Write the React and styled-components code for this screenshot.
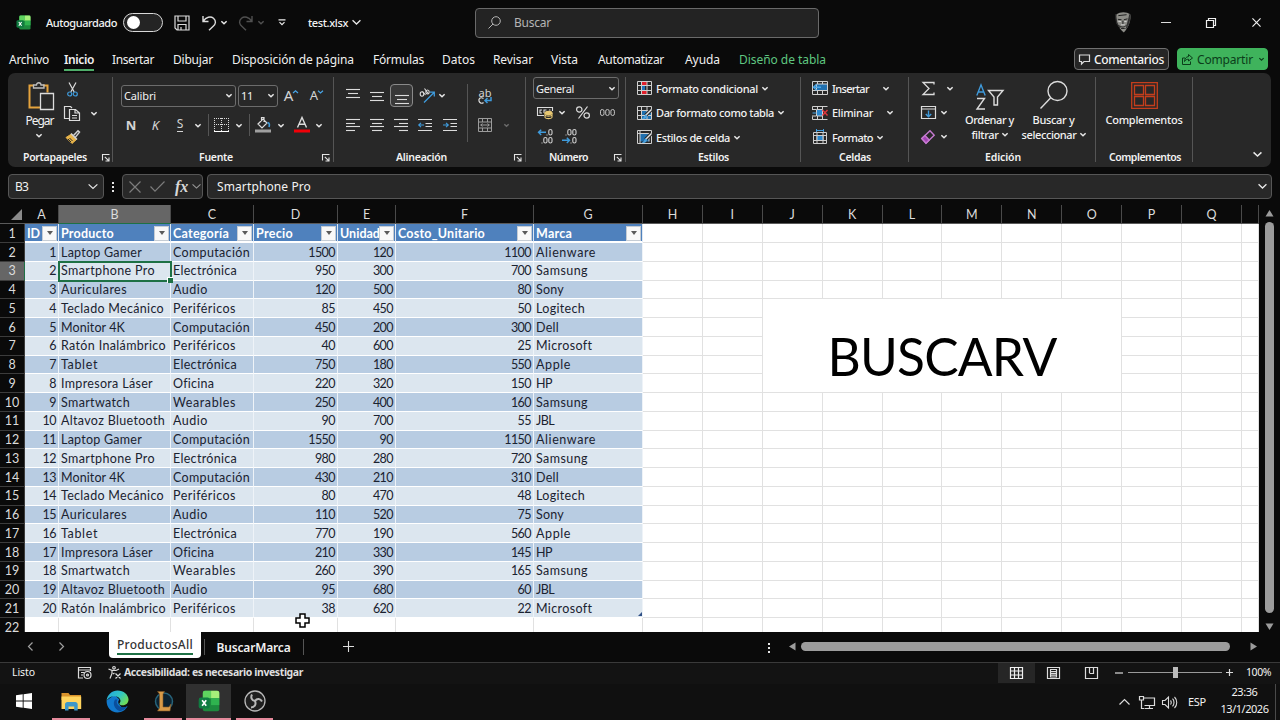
import React, { useLayoutEffect, useRef, useState } from "react";
import styled, { createGlobalStyle, css } from "styled-components";

const GlobalStyle = createGlobalStyle`
  * {
    box-sizing: border-box;
  }

  body {
    margin: 0;
    background: #0a0a0a;
    overflow: hidden;
  }
`;

const Window = styled.div`
  width: 1280px;
  height: 720px;
  display: flex;
  flex-direction: column;
  overflow: hidden;
  background: #0a0a0a;
  color: #f2f2f2;
  font-family: "Noto Sans", "Open Sans", sans-serif;
  font-size: 12px;
  line-height: 1;
  cursor: default;
`;

const Svg = styled.svg`
  display: block;
  flex: none;
  fill: none;
  stroke: ${(p) => p.$color || "#dcdcdc"};
  stroke-width: ${(p) => p.$stroke || 1.2};
  overflow: visible;
`;

const FitSpan = styled.span`
  display: inline-block;
  flex: none;
  white-space: nowrap;
`;

// Spreads the letters of a label over a fixed width
function Fit({ w, children, ...rest }) {
  const ref = useRef(null);
  const [spacing, setSpacing] = useState(0);

  useLayoutEffect(() => {
    const range = document.createRange();
    range.selectNodeContents(ref.current);
    const natural = range.getBoundingClientRect().width;
    setSpacing((w - natural) / children.length);
  }, [w, children]);

  return (
    <FitSpan ref={ref} style={{ letterSpacing: spacing, width: w }} {...rest}>
      {children}
    </FitSpan>
  );
}

/* ---------- shared pieces ---------- */

const Slot = styled.div`
  flex: none;
  width: ${(p) => p.$w}px;
  height: ${(p) => (p.$h ? `${p.$h}px` : "auto")};
  display: flex;
  align-items: center;
  justify-content: ${(p) => (p.$start ? "flex-start" : "center")};
`;

const Grow = styled.div`
  flex: 1;
`;

function Chevron({ size = 6, color = "#e8e8e8", stroke = 1.5 }) {
  return (
    <Svg width={size} height={size / 2} viewBox="0 0 8 4" $color={color} $stroke={(stroke * 8) / size}>
      <path d="M0.5 0.3 4 3.6 7.5 0.3" />
    </Svg>
  );
}

function ExcelLogo({ size }) {
  return (
    <Svg width={size} height={size} viewBox="0 0 32 32">
      <g stroke="none">
        <rect x="7" y="1" width="24" height="30" rx="3" fill="#1d8a3e" />
        <path d="M7 4a3 3 0 0 1 3-3h9v11H7z" fill="#5fd35f" />
        <path d="M19 1h9a3 3 0 0 1 3 3v8H19z" fill="#a6f07a" />
        <path d="M19 12h12v10H19z" fill="#2fb34f" />
        <rect x="1" y="11" width="16" height="16" rx="3" fill="#107c41" />
      </g>
      <path d="M6 15l6 8M12 15l-6 8" stroke="#fff" strokeWidth="2.4" />
    </Svg>
  );
}

/* ---------- title bar ---------- */

const TitleBar = styled.header`
  flex: none;
  height: 45px;
  display: flex;
  align-items: center;
  font-size: 11px;
  font-weight: 500;
`;

const Toggle = styled.div`
  flex: none;
  width: 40px;
  height: 19px;
  margin-left: 6px;
  padding: 2px 3px;
  border: 1px solid #d8d8d8;
  border-radius: 10px;
  background: #242424;

  &::before {
    content: "";
    display: block;
    width: 13px;
    height: 13px;
    border-radius: 50%;
    background: #fff;
  }
`;

const SearchBox = styled.div`
  flex: none;
  width: 344px;
  height: 30px;
  display: flex;
  align-items: center;
  padding-left: 12px;
  gap: 13px;
  border: 1px solid #6a6a6a;
  border-radius: 4px;
  background: #232323;
  color: #b4b4b4;
  font-size: 12px;
  font-weight: 400;
`;

function TopBar() {
  return (
    <TitleBar>
      <Slot $w={46}>
        <ExcelLogo size={15} />
      </Slot>
      <Fit w={71}>Autoguardado</Fit>
      <Toggle />
      <Slot $w={37}>
        <Svg width="16" height="16" viewBox="0 0 16 16">
          <path d="M1 1h14v14H3l-2-2zM4 1v5h8V1M4 15V9.500h8V15M7 12v3" />
        </Svg>
      </Slot>
      <Slot $w={18}>
        <Svg width="15" height="16" viewBox="0 0 15 16" $stroke={1.4}>
          <path d="M1 1v5.500h5.500M1.300 6.200C4 2 8.500 0.800 11.500 3.300c3 2.800 2.200 5.700-0.300 8L7 15.300" />
        </Svg>
      </Slot>
      <Slot $w={12}>
        <Chevron />
      </Slot>
      <Slot $w={31}>
        <Svg width="15" height="16" viewBox="0 0 15 16" $color="#505050" $stroke={1.4}>
          <path d="M14 1v5.500H8.500M13.700 6.200C11 2 6.500 0.800 3.500 3.300c-3 2.800-2.200 5.700 0.300 8L8 15.300" />
        </Svg>
      </Slot>
      <Slot $w={0}>
        <Chevron color="#505050" />
      </Slot>
      <Slot $w={41}>
        <Svg width="8" height="7" viewBox="0 0 8 7" $color="#ececec">
          <path d="M0.500 0.800h7M1.500 3.200 4 5.700l2.500-2.500" />
        </Svg>
      </Slot>
      <Slot $w={6} />
      <Fit w={40}>test.xlsx</Fit>
      <Slot $w={17}>
        <Chevron size={9} stroke={1.300} />
      </Slot>
      <Slot $w={110} />
      <SearchBox>
        <Svg width="13" height="13" viewBox="0 0 13 13" $color="#b4b4b4" $stroke={1}>
          <circle cx="8" cy="5" r="4.300" />
          <path d="M5 8 0.500 12.500" />
        </Svg>
        <Fit w={37}>Buscar</Fit>
      </SearchBox>
      <Grow />
      <Slot $w={24}>
        <Svg width="22" height="23" viewBox="0 0 24 24" $color="#181818" $stroke={1}>
          <path d="M6 3c4-3 11-3 15 0 1 6-1 13-7 20C7 17 4 9 6 3z" fill="#8d8d88" stroke="none" />
          <path d="M5 3c0 6 1 10 5 15L6 13zM20 3c1 5 0 11-4 16" fill="#333" stroke="#2b2b2b" />
          <path d="M7.500 8.500l4 0.500M14 9 18 8M13 10v4M9 15.500c3 2 5 2 8-0.500M11 18.500h4M8 4.500l9-1" />
          <path d="M8 11h3M14.500 11H17M11 14.500h4" stroke="#d8d8d8" />
        </Svg>
      </Slot>
      <Slot $w={22} />
      <Slot $w={20}>
        <Svg width="10" height="10" viewBox="0 0 10 10" $stroke={1}>
          <path d="M0 4.500h10" />
        </Svg>
      </Slot>
      <Slot $w={25} />
      <Slot $w={20}>
        <Svg width="10" height="10" viewBox="0 0 10 10" $color="#f0f0f0" $stroke={1.200}>
          <path d="M0.500 2.500h7v7h-7zM2.500 2.500v-2h7v7h-2" />
        </Svg>
      </Slot>
      <Slot $w={25} />
      <Slot $w={20}>
        <Svg width="9" height="9" viewBox="0 0 10 10" $color="#f0f0f0" $stroke={1.300}>
          <path d="M0.500 0.500l9 9M9.500 0.500l-9 9" />
        </Svg>
      </Slot>
      <Slot $w={14} />
    </TitleBar>
  );
}

/* ---------- ribbon tabs ---------- */

const TabsBar = styled.nav`
  flex: none;
  height: 28px;
  display: flex;
  align-items: center;
  padding: 0 12px 0 9px;
`;

const RibbonTab = styled.div`
  flex: none;
  height: 22px;
  margin-top: 2px;
  margin-right: ${(p) => p.$gap}px;
  padding-top: 5px;
  border-bottom: 2px solid ${(p) => (p.$active ? "#4fae6a" : "transparent")};
  color: ${(p) => (p.$contextual ? "#5fc680" : "#f0f0f0")};
  font-weight: ${(p) => (p.$active ? 600 : 400)};
`;

const BarButton = styled.div`
  flex: none;
  width: ${(p) => p.$w}px;
  height: 22px;
  display: flex;
  align-items: center;
  gap: 4px;
  margin-left: 8px;
  padding: 1px 0 0 4px;
  border: 1px solid ${(p) => (p.$green ? "#3fb35c" : "#707070")};
  border-radius: 4px;
  background: ${(p) => (p.$green ? "#3fb35c" : "#262626")};
  color: ${(p) => (p.$green ? "#0b3d1a" : "#f5f5f5")};
  font-weight: ${(p) => (p.$green ? 400 : 500)};
`;

const tabs = [
  ["Archivo", 40, 15],
  ["Inicio", 30, 18],
  ["Insertar", 42, 19],
  ["Dibujar", 40, 19],
  ["Disposición de página", 122, 19],
  ["Fórmulas", 51, 18],
  ["Datos", 33, 18],
  ["Revisar", 40, 18],
  ["Vista", 27, 20],
  ["Automatizar", 66, 21],
  ["Ayuda", 35, 19],
  ["Diseño de tabla", 87, 0],
];

function RibbonTabs() {
  return (
    <TabsBar>
      {tabs.map(([label, w, gap]) => (
        <RibbonTab key={label} $gap={gap} $active={label === "Inicio"} $contextual={label === "Diseño de tabla"}>
          <Fit w={w}>{label}</Fit>
        </RibbonTab>
      ))}
      <Grow />
      <BarButton $w={95}>
        <Svg width="11" height="11" viewBox="0 0 11 11">
          <path d="M0.500 1h10v6.500H5L2.500 10V7.500h-2z" />
        </Svg>
        <Fit w={70}>Comentarios</Fit>
      </BarButton>
      <BarButton $w={91} $green>
        <Svg width="11" height="11" viewBox="0 0 11 11" $color="#0b3d1a" $stroke={1}>
          <path d="M3 4H0.500v6.500h8V7.500M6.500 0.500l4 3.500-4 3V5.200C4.500 5.200 3.500 6 2.500 7.500 2.800 4.500 4 2.800 6.500 2.600z" />
        </Svg>
        <Fit w={56}>Compartir</Fit>
        <Slot $w={8}>
          <Chevron size={5} color="#0b3d1a" stroke={1.200} />
        </Slot>
      </BarButton>
    </TabsBar>
  );
}

/* ---------- ribbon ---------- */

const RibbonPanel = styled.section`
  flex: none;
  height: 94px;
  margin: 0 9px 0 8px;
  padding-top: 4px;
  display: flex;
  align-items: flex-start;
  border-radius: 7px;
  background: #282828;
`;

const Group = styled.div`
  flex: none;
  width: ${(p) => p.$w}px;
  height: 85px;
  display: flex;
  flex-direction: column;
  border-right: 1px solid #555;
`;

const GroupBody = styled.div`
  flex: none;
  height: 73px;
  display: flex;
  align-items: flex-start;
  padding-left: ${(p) => p.$pl || 0}px;
`;

const GroupFooter = styled.div`
  flex: none;
  height: 15px;
  display: flex;
  align-items: center;
  padding-left: ${(p) => p.$pl}px;
  font-size: 10.500px;
  font-weight: 600;
`;

const Stack = styled.div`
  flex: none;
  width: ${(p) => (p.$w ? `${p.$w}px` : "auto")};
  padding-top: ${(p) => p.$pt || 0}px;
  display: flex;
  flex-direction: column;
  align-items: ${(p) => (p.$center ? "center" : "stretch")};
  gap: ${(p) => p.$gap || 0}px;
`;

const Line = styled.div`
  height: ${(p) => p.$h}px;
  display: flex;
  align-items: center;
`;

const Rule = styled.div`
  flex: none;
  width: 1px;
  height: ${(p) => p.$h}px;
  margin: ${(p) => p.$mt || 0}px ${(p) => p.$mr || 0}px 0 ${(p) => p.$ml || 0}px;
  background: #555;
`;

const Combo = styled.div`
  flex: none;
  width: ${(p) => p.$w}px;
  height: 22px;
  margin-right: ${(p) => p.$mr || 0}px;
  display: flex;
  align-items: center;
  justify-content: space-between;
  padding: 0 3px 0 2px;
  border: 1px solid #6c6c6c;
  border-radius: 3px;
  font-size: 11px;
`;

const Pressed = styled.div`
  width: 23px;
  height: 23px;
  display: flex;
  align-items: center;
  justify-content: center;
  border: 1px solid #8a8a8a;
  border-radius: 4px;
  background: #383838;
`;

const Letter = styled.span`
  color: #d4d4d4;
  font-size: ${(p) => p.$size || 13}px;
  font-weight: ${(p) => (p.$bold ? 700 : 400)};
  font-style: ${(p) => (p.$italic ? "italic" : "normal")};
  ${(p) =>
    p.$under &&
    css`
      padding-bottom: 1px;
      border-bottom: 1px solid #d4d4d4;
    `}
`;

const Command = styled.div`
  height: 24.5px;
  display: flex;
  align-items: center;
  gap: 4px;
  padding-bottom: 2px;
  font-size: 11px;
  font-weight: 500;
`;

const BigLabel = styled.div`
  height: 15px;
  display: flex;
  align-items: center;
  justify-content: center;
  gap: 3px;
  font-size: 11px;
  font-weight: 500;
`;

function Launcher() {
  return (
    <Svg width="8" height="8" viewBox="0 0 8 8" $color="#e4e4e4" $stroke={1.100}>
      <path d="M0.500 6.500v-6h7M2.800 2.800l4 4M7 3.500V7H3.500" />
    </Svg>
  );
}

function Lines({ rows }) {
  return (
    <Svg width="14" height="14" viewBox="0 0 14 14" $stroke={1.100}>
      {rows.map(([x1, x2, y]) => (
        <path key={y} d={`M${x1} ${y}H${x2}`} />
      ))}
    </Svg>
  );
}

function IndentIcon({ right }) {
  return (
    <Svg width="14" height="14" viewBox="0 0 14 14" $stroke={1.100}>
      <path d="M0 1.500h14M7.500 5.500H14M7.500 8.500H14M0 12.500h14" />
      <path d={right ? "M0 7h5M3 4.800 5.300 7 3 9.200" : "M6 7H1M3 4.800 0.700 7 3 9.200"} stroke="#3f9bdc" />
    </Svg>
  );
}

function TableIcon({ kind }) {
  return (
    <Svg width="15" height="14" viewBox="0 0 15 14" $color="#cfcfcf" $stroke={1}>
      {kind === "conditional" && (
        <g stroke="none">
          <path d="M4 0.500h6v4H4zM4 9.500h6v4H4z" fill="#e01f2b" />
          <path d="M5 4.500h3v5H5z" fill="#2072b8" />
        </g>
      )}
      {kind === "table" && <path d="M5 4.500h9.500v9H5z" fill="#1f6fae" stroke="none" />}
      {kind === "styles" && <path d="M3 3.500h9v8H3z" fill="#1f6fae" stroke="none" />}
      {kind === "styles" ? (
        <path d="M0.500 0.500h14v13H0.500zM3 0.500v13M0.500 3.500h14M12 3.500v8" />
      ) : (
        <path d="M0.500 0.500h14v13H0.500zM4.500 0.500v13M10 0.500v13M0.500 4.500h14M0.500 9.500h14" />
      )}
      {kind !== "conditional" && (
        <>
          <path d="M14.500 3.500 8.500 9.500" stroke="#282828" strokeWidth="3.500" />
          <path d="M14.500 3.500 8.500 9.500" stroke="#e6e6e6" strokeWidth="1.500" />
          <path d="M9.500 8.500C7 8.500 7.500 12 4.500 12.500c2.500 1.500 5.500 0 5.500-3z" fill="#4aa3e0" stroke="none" />
        </>
      )}
    </Svg>
  );
}

function CellsIcon({ kind }) {
  return (
    <Svg width="16" height="14" viewBox="0 0 16 14" $color="#cfcfcf" $stroke={1}>
      {kind === "insert" && (
        <>
          <path d="M0.500 0.500h15v13H0.500zM5.500 0.500v13M10.500 0.500v13M0.500 9.500h15" />
          <path d="M4.500 3h11v6.500h-11z" fill="#1f6fae" />
          <path d="M9 6.200H1.500M4.500 3.200l-3 3 3 3" stroke="#49a5e6" strokeWidth="1.400" />
        </>
      )}
      {kind === "delete" && (
        <>
          <path d="M0.500 3.500v-3h15M5.500 0.500v3M10.500 0.500v3M0.500 10.500v3h15M5.500 10v3.500M10.500 10v3.500M0 3.500h4M0 10h4" />
          <path d="M4.500 3.500h6v6.500h-6z" fill="#2a86cc" />
          <path d="M0.500 7h4" stroke="#49a5e6" />
          <path d="M10.500 4l5 5.500M15.500 4l-5 5.500" stroke="#e0353d" strokeWidth="1.400" />
        </>
      )}
      {kind === "format" && (
        <>
          <path d="M1.500 2.500h13v11h-13zM5 2.500v11M11 2.500v11M1.500 5.500h13M1.500 10.500h13" />
          <path d="M5 5.500h6v5H5z" fill="#2a86cc" />
          <path d="M4.500 0.500h7M4.500-1v3M11.500-1v3" stroke="#3f9bdc" />
        </>
      )}
    </Svg>
  );
}

function ClipboardGroup() {
  return (
    <Group $w={105}>
      <GroupBody>
        <Stack $w={55} $pt={5}>
          <Slot $w={66} $h={28}>
            <Svg width="26" height="28" viewBox="0 0 26 28" $stroke={1.300}>
              <path d="M5.500 3.500h-4v22h11" stroke="#e5a33d" strokeWidth="2" />
              <path d="M15 3.500h4.500v7" stroke="#e5a33d" strokeWidth="2" />
              <path d="M5.500 6V3h3c0-3 4.500-3 4.500 0h3v3z" stroke="#bdbdbd" />
              <path d="M12.500 11.500h13v16h-13z" fill="#282828" />
            </Svg>
          </Slot>
          <Slot $w={63} $h={22}>
            <Fit w={28}>Pegar</Fit>
          </Slot>
          <Slot $w={62} $h={6}>
            <Chevron />
          </Slot>
        </Stack>
        <Stack $w={49}>
          <Line $h={24}>
            <Slot $w={4} />
            <Svg width="11" height="15" viewBox="0 0 11 15">
              <path d="M2 0.500l5.200 9.500M9 0.500 3.800 10" />
              <circle cx="2.700" cy="12" r="2" stroke="#3f9bdc" />
              <circle cx="8.300" cy="12" r="2" stroke="#3f9bdc" />
            </Svg>
          </Line>
          <Line $h={24}>
            <Slot $w={1} />
            <Svg width="16" height="15" viewBox="0 0 16 15" $stroke={1.200}>
              <path d="M5 12.500H0.500V0.500h6l1.500 1.500M5.500 3.500h6l4 3.500v7.500h-10zM11 3.500V7h4.500M8 9.500h5M8 12h5" />
            </Svg>
            <Slot $w={11} />
            <Chevron />
          </Line>
          <Line $h={24}>
            <Slot $w={2} />
            <Svg width="15" height="14" viewBox="0 0 15 14" $stroke={1}>
              <path d="M1 7.500 6.500 4l5 5.500L7 13.500z" fill="#e8b44a" stroke="#e8b44a" />
              <path d="M3 9l3 3M4.500 8l3 3" stroke="#282828" />
              <path d="M6 3.500l6 6M8.500 5.500 13 0.700l1.500 1.400-4 5" stroke="#d0d0d0" strokeWidth="1.500" />
            </Svg>
          </Line>
        </Stack>
      </GroupBody>
      <GroupFooter $pl={15}>
        <Fit w={64}>Portapapeles</Fit>
        <Slot $w={15} />
        <Launcher />
      </GroupFooter>
    </Group>
  );
}

function FontGroup() {
  return (
    <Group $w={221}>
      <GroupBody $pl={6}>
        <Stack $pt={7} $gap={6}>
          <Line $h={23}>
            <Slot $w={2} />
            <Combo $w={115} $mr={2}>
              <Fit w={32}>Calibri</Fit>
              <Chevron />
            </Combo>
            <Combo $w={40}>
              <Fit w={12}>11</Fit>
              <Chevron />
            </Combo>
            <Slot $w={26}>
              <Letter $size={15}>A</Letter>
              <Svg width="5" height="12" viewBox="0 0 5 12" $color="#49a5e6">
                <path d="M0 3 2.500 0.700 5 3" />
              </Svg>
            </Slot>
            <Slot $w={25}>
              <Letter $size={13}>A</Letter>
              <Svg width="5" height="12" viewBox="0 0 5 12" $color="#49a5e6">
                <path d="M0 0.700 2.500 3 5 0.700" />
              </Svg>
            </Slot>
          </Line>
          <Line $h={24}>
            <Slot $w={24}>
              <Letter $bold>N</Letter>
            </Slot>
            <Slot $w={25}>
              <Letter $italic>K</Letter>
            </Slot>
            <Slot $w={24}>
              <Letter $under $size={12}>S</Letter>
            </Slot>
            <Slot $w={12}>
              <Chevron />
            </Slot>
            <Slot $w={8}>
              <Rule $h={22} />
            </Slot>
            <Slot $w={19}>
              <Svg width="15" height="14" viewBox="0 0 15 14" $stroke={1}>
                <path d="M0.500 0v13M7.500 0v13M14.500 0v13M0 0.500h15M0 6.500h15" strokeDasharray="1 1" />
                <path d="M0 13.500h15" stroke="#fff" />
              </Svg>
            </Slot>
            <Slot $w={15}>
              <Chevron />
            </Slot>
            <Slot $w={6}>
              <Rule $h={22} />
            </Slot>
            <Slot $w={22}>
              <Svg width="16" height="16" viewBox="0 0 16 16" $stroke={1.200}>
                <path d="M3 7 8 2l4 4-5 5zM6.500 4V0.500H9V5" />
                <path d="M12.500 5.500C15 6 14.500 8.500 14 10" stroke="#3f9bdc" strokeWidth="1.600" />
                <path d="M0 14h16" stroke="#a0a0a0" strokeWidth="3" />
              </Svg>
            </Slot>
            <Slot $w={14}>
              <Chevron />
            </Slot>
            <Slot $w={27}>
              <Svg width="16" height="16" viewBox="0 0 16 16" $stroke={1.400}>
                <path d="M3.500 10.500 8 0.500l4.500 10M5 7.200h6" />
                <path d="M0 14h16" stroke="#f00008" strokeWidth="3" />
              </Svg>
            </Slot>
            <Slot $w={7}>
              <Chevron />
            </Slot>
          </Line>
        </Stack>
      </GroupBody>
      <GroupFooter $pl={86}>
        <Fit w={34}>Fuente</Fit>
        <Slot $w={89} />
        <Launcher />
      </GroupFooter>
    </Group>
  );
}

function AlignGroup() {
  return (
    <Group $w={192}>
      <GroupBody $pl={6}>
        <Stack $pt={7} $gap={6}>
          <Line $h={23}>
            <Slot $w={25}>
              <Lines rows={[[0, 14, 0.5], [2, 12, 4.5], [0, 14, 8.5]]} />
            </Slot>
            <Slot $w={24}>
              <Lines rows={[[0, 14, 3.5], [2, 12, 7.5], [0, 14, 11.5]]} />
            </Slot>
            <Slot $w={25}>
              <Pressed>
                <Lines rows={[[0, 14, 6.5], [2, 12, 10.5], [0, 14, 14.5]]} />
              </Pressed>
            </Slot>
            <Slot $w={25}>
              <Svg width="16" height="15" viewBox="0 0 16 15" $stroke={1.100}>
                <ellipse cx="3" cy="6" rx="1.800" ry="2.200" />
                <path d="M3.500 3.500 6.500 7M5.500 0.500 9.500 6" />
                <ellipse cx="8.500" cy="4" rx="1.700" ry="2" />
                <path d="M5 14.500 15 4.500M11 4.200h4.300v4.300" stroke="#3f9bdc" strokeWidth="1.300" />
              </Svg>
            </Slot>
            <Slot $w={6}>
              <Chevron />
            </Slot>
          </Line>
          <Line $h={24}>
            <Slot $w={25}>
              <Lines rows={[[0, 14, 1.5], [0, 9, 5.5], [0, 14, 8.5], [0, 9, 12.5]]} />
            </Slot>
            <Slot $w={24}>
              <Lines rows={[[0, 14, 1.5], [2, 12, 5.5], [0, 14, 8.5], [2, 12, 12.5]]} />
            </Slot>
            <Slot $w={24}>
              <Lines rows={[[0, 14, 1.5], [5, 14, 5.5], [0, 14, 8.5], [5, 14, 12.5]]} />
            </Slot>
            <Slot $w={24}>
              <IndentIcon />
            </Slot>
            <Slot $w={25}>
              <IndentIcon right />
            </Slot>
          </Line>
        </Stack>
        <Rule $h={58} $mt={7} $ml={5} $mr={5} />
        <Stack $pt={7} $gap={6}>
          <Line $h={23}>
            <Slot $w={24}>
              <Stack $center>
                <Letter $size={11}>ab</Letter>
                <Svg width="14" height="7" viewBox="0 0 14 7" $stroke={1.200}>
                  <path d="M5.500 0.500C2-1.500 0.500 1 1 3s3 3 4.500 1.500" />
                  <path d="M13-1v3.500H7M9.500 0 7 2.500 9.500 5" stroke="#3f9bdc" strokeWidth="1.500" />
                </Svg>
              </Stack>
            </Slot>
          </Line>
          <Line $h={24}>
            <Slot $w={23}>
              <Svg width="14" height="14" viewBox="0 0 14 14" $color="#9c9c9c" $stroke={1}>
                <path d="M0.500 0.500h13v13H0.500zM0.500 4h13M0.500 10h13M4.500 0.500V4M9.500 0.500V4M4.500 10v3.500M9.500 10v3.500M2.500 7h9M4.500 5.500 2.800 7l1.700 1.500M9.500 5.500 11.200 7 9.500 8.500" />
              </Svg>
            </Slot>
            <Slot $w={21}>
              <Chevron size={5} color="#6a6a6a" />
            </Slot>
          </Line>
        </Stack>
      </GroupBody>
      <GroupFooter $pl={62}>
        <Fit w={51}>Alineación</Fit>
        <Slot $w={67} />
        <Launcher />
      </GroupFooter>
    </Group>
  );
}

function DecimalIcon({ less }) {
  return (
    <Svg width="15" height="15" viewBox="0 0 15 15" $color="#cfcfcf" $stroke={1.100}>
      <rect x="10.800" y="0.500" width="3.200" height="5.500" rx="1.600" />
      <rect x="10.800" y="8.500" width="3.200" height="5.500" rx="1.600" />
      {less ? (
        <>
          <rect x="5.800" y="0.500" width="3.200" height="5.500" rx="1.600" />
          <path d="M3.500 6h1M8.500 14h1" />
          <path d="M0 11.300h7.500M4.800 8.700l2.700 2.600-2.700 2.600" stroke="#3f9bdc" strokeWidth="1.400" />
        </>
      ) : (
        <>
          <rect x="5.800" y="8.500" width="3.200" height="5.500" rx="1.600" />
          <path d="M8.500 6h1M3.500 14h1" />
          <path d="M8 3.300H0.500M3.200 0.700 0.500 3.300l2.700 2.600" stroke="#3f9bdc" strokeWidth="1.400" />
        </>
      )}
    </Svg>
  );
}

function NumberGroup() {
  return (
    <Group $w={100}>
      <GroupBody $pl={7}>
        <Stack>
          <Combo $w={86}>
            <Fit w={38}>General</Fit>
            <Chevron />
          </Combo>
          <Line $h={27}>
            <Slot $w={23}>
              <Svg width="16" height="13" viewBox="0 0 16 13" $stroke={1.100}>
                <path d="M7 9.500H0.500v-8h15V5" />
                <path d="M5 4H3v3h2M7 7V4h2.500M12 4h1.500" />
                <ellipse cx="11.500" cy="7" rx="3.500" ry="1.600" fill="#e8c872" stroke="#e8c872" />
                <path d="M8 9c1 1.500 6 1.500 7 0M8 11.500c1 1.500 6 1.500 7 0M8 7v4.500M15 7v4.500" stroke="#e8c872" />
              </Svg>
            </Slot>
            <Slot $w={11}>
              <Chevron />
            </Slot>
            <Slot $w={32}>
              <Svg width="14" height="13" viewBox="0 0 14 13" $stroke={1.200}>
                <circle cx="3.300" cy="3.500" r="2.700" />
                <circle cx="10.700" cy="9.500" r="2.700" />
                <path d="M11.500 0.500l-9 12" />
              </Svg>
            </Slot>
            <Slot $w={17}>
              <Svg width="15" height="8" viewBox="0 0 15 8" $color="#c4c4c4" $stroke={1}>
                <rect x="0.500" y="0.500" width="3.500" height="6" rx="1.700" />
                <rect x="5.700" y="0.500" width="3.500" height="6" rx="1.700" />
                <rect x="10.900" y="0.500" width="3.500" height="6" rx="1.700" />
              </Svg>
            </Slot>
          </Line>
          <Line $h={21}>
            <Slot $w={24}>
              <DecimalIcon />
            </Slot>
            <Slot $w={25}>
              <DecimalIcon less />
            </Slot>
          </Line>
        </Stack>
      </GroupBody>
      <GroupFooter $pl={23}>
        <Fit w={39}>Número</Fit>
        <Slot $w={26} />
        <Launcher />
      </GroupFooter>
    </Group>
  );
}

function StylesGroup() {
  return (
    <Group $w={175}>
      <GroupBody $pl={11}>
        <Stack>
          <Command>
            <TableIcon kind="conditional" />
            <Fit w={102}>Formato condicional</Fit>
            <Chevron />
          </Command>
          <Command>
            <TableIcon kind="table" />
            <Fit w={118}>Dar formato como tabla</Fit>
            <Chevron />
          </Command>
          <Command>
            <TableIcon kind="styles" />
            <Fit w={74}>Estilos de celda</Fit>
            <Chevron />
          </Command>
        </Stack>
      </GroupBody>
      <GroupFooter $pl={72}>
        <Fit w={31}>Estilos</Fit>
      </GroupFooter>
    </Group>
  );
}

function CellsGroup() {
  return (
    <Group $w={108}>
      <GroupBody $pl={11}>
        <Stack>
          <Command>
            <CellsIcon kind="insert" />
            <Fit w={37}>Insertar</Fit>
            <Slot $w={6} />
            <Chevron />
          </Command>
          <Command>
            <CellsIcon kind="delete" />
            <Fit w={41}>Eliminar</Fit>
            <Slot $w={6} />
            <Chevron />
          </Command>
          <Command>
            <CellsIcon kind="format" />
            <Fit w={41}>Formato</Fit>
            <Chevron />
          </Command>
        </Stack>
      </GroupBody>
      <GroupFooter $pl={38}>
        <Fit w={32}>Celdas</Fit>
      </GroupFooter>
    </Group>
  );
}

function EditGroup() {
  return (
    <Group $w={187}>
      <GroupBody $pl={8}>
        <Stack $w={39}>
          <Line $h={23}>
            <Slot $w={22}>
              <Svg width="13" height="13" viewBox="0 0 13 13" $stroke={1.300}>
                <path d="M12 2.500v-2H1l6 6-6 6h11v-2" />
              </Svg>
            </Slot>
            <Slot $w={22}>
              <Chevron />
            </Slot>
          </Line>
          <Line $h={25}>
            <Slot $w={22}>
              <Svg width="15" height="13" viewBox="0 0 15 13" $stroke={1.200}>
                <path d="M0.500 0.500h14v12H0.500zM0.500 3h14" />
                <path d="M7.500 4.500v6M4.800 8l2.700 2.700L10.200 8" stroke="#3f9bdc" strokeWidth="1.400" />
              </Svg>
            </Slot>
            <Slot $w={9}>
              <Chevron />
            </Slot>
          </Line>
          <Line $h={23}>
            <Slot $w={22}>
              <Svg width="14" height="14" viewBox="0 0 14 14" $color="#c57ad0" $stroke={1.400}>
                <path d="M0.800 8.500 9 0.800l4.200 4.500-8.200 8z" />
                <path d="M0.800 8.500 4 5.500 8.200 10 5 13.300z" fill="#a342b4" />
              </Svg>
            </Slot>
            <Slot $w={9}>
              <Chevron />
            </Slot>
          </Line>
        </Stack>
        <Stack $w={67} $center $pt={4}>
          <Slot $w={50} $h={31}>
            <Svg width="28" height="26" viewBox="0 0 28 26" $stroke={1.400}>
              <path d="M0.800 11.500 5 0.800l4.200 10.700M2.200 8h5.600" stroke="#3f9bdc" />
              <path d="M1 14.500h7.500L1 25h8" />
              <path d="M12.500 6.500h14.500l-5.500 6.500v8h-3.500v-8z" />
            </Svg>
          </Slot>
          <BigLabel>
            <Fit w={49}>Ordenar y</Fit>
          </BigLabel>
          <BigLabel>
            <Fit w={27}>filtrar</Fit>
            <Chevron />
          </BigLabel>
        </Stack>
        <Stack $w={61} $center $pt={4}>
          <Slot $w={50} $h={28}>
            <Svg width="28" height="28" viewBox="0 0 28 28" $stroke={1.400}>
              <circle cx="17.500" cy="10" r="9.500" />
              <path d="M10.500 17 0.500 27.500" />
            </Svg>
          </Slot>
          <Slot $w={50} $h={3} />
          <BigLabel>
            <Fit w={42}>Buscar y</Fit>
          </BigLabel>
          <BigLabel>
            <Fit w={55}>seleccionar</Fit>
            <Chevron />
          </BigLabel>
        </Stack>
      </GroupBody>
      <GroupFooter $pl={76}>
        <Fit w={36}>Edición</Fit>
      </GroupFooter>
    </Group>
  );
}

function AddinsGroup() {
  return (
    <Group $w={97}>
      <GroupBody>
        <Stack $w={96} $center $pt={4}>
          <Slot $w={50} $h={28}>
            <Svg width="27" height="27" viewBox="0 0 27 27" $color="#c43e1c" $stroke={1.300}>
              <path d="M0.700 0.700h25.600v25.600H0.700zM3.500 3.500h9v9h-9zM14.500 3.500h9v9h-9zM3.500 14.500h9v9h-9zM14.500 14.500h9v9h-9z" />
            </Svg>
          </Slot>
          <Slot $w={50} $h={3} />
          <BigLabel>
            <Fit w={77}>Complementos</Fit>
          </BigLabel>
        </Stack>
      </GroupBody>
      <GroupFooter $pl={13}>
        <Fit w={72}>Complementos</Fit>
      </GroupFooter>
    </Group>
  );
}

const CollapseArea = styled.div`
  flex: 1;
  display: flex;
  justify-content: flex-end;
  padding: 75px 9px 0 0;
`;

function Ribbon() {
  return (
    <RibbonPanel>
      <ClipboardGroup />
      <FontGroup />
      <AlignGroup />
      <NumberGroup />
      <StylesGroup />
      <CellsGroup />
      <EditGroup />
      <AddinsGroup />
      <CollapseArea>
        <Chevron size={9} />
      </CollapseArea>
    </RibbonPanel>
  );
}

/* ---------- formula bar ---------- */

const FormulaRow = styled.div`
  flex: none;
  height: 38px;
  display: flex;
  align-items: center;
  padding: 1px 8px 0;
`;

const Field = styled.div`
  flex: ${(p) => (p.$w ? "none" : 1)};
  width: ${(p) => (p.$w ? `${p.$w}px` : "auto")};
  height: 25px;
  display: flex;
  align-items: center;
  justify-content: space-between;
  padding: 0 ${(p) => p.$pr || 5}px 0 ${(p) => p.$pl || 6}px;
  border: 1px solid #565656;
  border-radius: 4px;
  background: #282828;
`;

const FxLabel = styled.span`
  font-family: "Liberation Serif", serif;
  font-size: 16px;
  font-style: italic;
  font-weight: 700;
  color: #d8d8d8;
`;

const Dots = styled.div`
  flex: none;
  width: ${(p) => p.$w}px;
  display: flex;
  flex-direction: column;
  align-items: center;
  gap: 2px;

  i {
    width: 2px;
    height: 2px;
    background: #e6e6e6;
  }
`;

function FormulaBar() {
  return (
    <FormulaRow>
      <Field $w={96}>
        <Fit w={13}>B3</Fit>
        <Chevron size={10} stroke={1.200} />
      </Field>
      <Dots $w={18}>
        <i />
        <i />
        <i />
      </Dots>
      <Field $w={81} $pl={6} $pr={1}>
        <Svg width="12" height="12" viewBox="0 0 12 12" $color="#7c7c7c">
          <path d="M0.500 0.500l11 11M11.500 0.500l-11 11" />
        </Svg>
        <Slot $w={2} />
        <Svg width="15" height="11" viewBox="0 0 15 11" $color="#7c7c7c">
          <path d="M0.500 5.500l4.500 4.700L14.500 0.500" />
        </Svg>
        <Slot $w={2} />
        <FxLabel>fx</FxLabel>
        <Chevron size={9} color="#9a9a9a" stroke={1.100} />
      </Field>
      <Slot $w={4} />
      <Field $pl={9} $pr={4}>
        <Fit w={94}>Smartphone Pro</Fit>
        <Chevron size={9} stroke={1.300} />
      </Field>
    </FormulaRow>
  );
}

/* ---------- worksheet ---------- */

const SheetArea = styled.main`
  flex: none;
  height: 427px;
  display: flex;
  overflow: hidden;
`;

const Grid = styled.div`
  flex: none;
  width: 1259px;
  display: grid;
  grid-template-columns: 25px 34px 112px 83px 84px 58px 138px 109px repeat(10, 59.900px) 1fr;
  grid-template-rows: 19px 19px repeat(21, 18.750px);
  color: #1a2230;
  font-family: Lato, sans-serif;
  font-size: 12.500px;
`;

const ColHead = styled.div`
  display: flex;
  align-items: center;
  justify-content: center;
  padding-top: 3px;
  border-right: 1px solid #4a4a4a;
  border-bottom: 1px solid ${(p) => (p.$active ? "#1e7145" : "#5a5a5a")};
  background: ${(p) => (p.$active ? "#666" : "#0a0a0a")};
  color: #dcdcdc;
`;

const RowHead = styled.div`
  display: flex;
  align-items: center;
  justify-content: center;
  padding-top: 2px;
  border-right: 1px solid ${(p) => (p.$active ? "#1e7145" : "#3c3c3c")};
  border-bottom: 1px solid #3c3c3c;
  background: ${(p) => (p.$active ? "#666" : "#0a0a0a")};
  color: #dcdcdc;
`;

const Corner = styled(ColHead)`
  align-items: flex-end;
  justify-content: flex-end;
  padding: 0 3px 3px 0;
  border-right: 0;
`;

const Cell = styled.div`
  min-width: 0;
  border-right: 1px solid #e1e1e1;
  border-bottom: 1px solid #e1e1e1;
  background: #fff;
`;

const DataCell = styled.div`
  position: relative;
  min-width: 0;
  display: flex;
  align-items: center;
  justify-content: ${(p) => (p.$num ? "flex-end" : "flex-start")};
  padding: 2px 2px 0 2px;
  border-right: 1px solid #eef3f8;
  border-bottom: 1px solid #fff;
  background: ${(p) => (p.$band ? "#b8cce2" : "#dce6ef")};
  white-space: nowrap;
  ${(p) =>
    p.$selected &&
    css`
      outline: 2px solid #1e7145;
      outline-offset: -1px;
      z-index: 1;

      &::after {
        content: "";
        position: absolute;
        right: -3px;
        bottom: -3px;
        width: 5px;
        height: 5px;
        background: #1e7145;
        border: 1px solid #fff;
        border-width: 1px 0 0 1px;
      }
    `}
  ${(p) =>
    p.$last &&
    css`
      &::after {
        content: "";
        position: absolute;
        right: 0;
        bottom: 1px;
        border: 2px solid #2f4f86;
        border-top-color: transparent;
        border-left-color: transparent;
      }
    `}
`;

const HeadCell = styled.div`
  min-width: 0;
  display: flex;
  align-items: center;
  padding: 1px 1px 0 2px;
  border-right: 1px solid #dfe8f2;
  border-bottom: 2px solid #fff;
  background: #4f81bd;
  color: #fff;
  font-weight: 700;
  line-height: 17px;
  white-space: nowrap;
`;

const HeadText = styled.span`
  min-width: 0;
  flex: 1;
`;

const FilterButton = styled.span`
  flex: none;
  width: 15px;
  height: 15px;
  display: flex;
  align-items: center;
  justify-content: center;
  border: 1px solid #c5ccd4;
  background: #f8f8f8;

  &::before {
    content: "";
    border: 3px solid transparent;
    border-top: 4px solid #5a5a5a;
    border-bottom: 0;
  }
`;

const Merged = styled.div`
  grid-column: 11 / span 6;
  grid-row: 6 / span 5;
  display: flex;
  align-items: center;
  justify-content: center;
  padding-top: 22px;
  border-right: 1px solid #e1e1e1;
  border-bottom: 1px solid #e1e1e1;
  background: #fff;
  color: #000;
  font-size: 51.500px;
`;

const letters = "ABCDEFGHIJKLMNOPQ".split("");

const headers = [
  ["ID", 13],
  ["Producto", 53],
  ["Categoría", 56],
  ["Precio", 37],
  ["Unidad", 40],
  ["Costo_Unitario", 87],
  ["Marca", 36],
];

const products = [
  [1, "Laptop Gamer", "Computación", 1500, 120, 1100, "Alienware"],
  [2, "Smartphone Pro", "Electrónica", 950, 300, 700, "Samsung"],
  [3, "Auriculares", "Audio", 120, 500, 80, "Sony"],
  [4, "Teclado Mecánico", "Periféricos", 85, 450, 50, "Logitech"],
  [5, "Monitor 4K", "Computación", 450, 200, 300, "Dell"],
  [6, "Ratón Inalámbrico", "Periféricos", 40, 600, 25, "Microsoft"],
  [7, "Tablet", "Electrónica", 750, 180, 550, "Apple"],
  [8, "Impresora Láser", "Oficina", 220, 320, 150, "HP"],
  [9, "Smartwatch", "Wearables", 250, 400, 160, "Samsung"],
  [10, "Altavoz Bluetooth", "Audio", 90, 700, 55, "JBL"],
  [11, "Laptop Gamer", "Computación", 1550, 90, 1150, "Alienware"],
  [12, "Smartphone Pro", "Electrónica", 980, 280, 720, "Samsung"],
  [13, "Monitor 4K", "Computación", 430, 210, 310, "Dell"],
  [14, "Teclado Mecánico", "Periféricos", 80, 470, 48, "Logitech"],
  [15, "Auriculares", "Audio", 110, 520, 75, "Sony"],
  [16, "Tablet", "Electrónica", 770, 190, 560, "Apple"],
  [17, "Impresora Láser", "Oficina", 210, 330, 145, "HP"],
  [18, "Smartwatch", "Wearables", 260, 390, 165, "Samsung"],
  [19, "Altavoz Bluetooth", "Audio", 95, 680, 60, "JBL"],
  [20, "Ratón Inalámbrico", "Periféricos", 38, 620, 22, "Microsoft"],
];

const textWidths = {
  "Laptop Gamer": 81,
  "Smartphone Pro": 94,
  Auriculares: 66,
  "Teclado Mecánico": 103,
  "Monitor 4K": 64,
  "Ratón Inalámbrico": 105,
  Tablet: 37,
  "Impresora Láser": 92,
  Smartwatch: 69,
  "Altavoz Bluetooth": 104,
  Computación: 77,
  Electrónica: 64,
  Audio: 35,
  Periféricos: 63,
  Oficina: 41,
  Wearables: 63,
  Alienware: 60,
  Samsung: 52,
  Sony: 28,
  Logitech: 49,
  Dell: 23,
  Microsoft: 56,
  Apple: 35,
  HP: 16,
  JBL: 18,
};

const ScrollColumn = styled.div`
  flex: 1;
  display: flex;
  flex-direction: column;
  align-items: center;
  padding: 4px 1px 1px 0;
  gap: 4px;
`;

const Thumb = styled.div`
  width: ${(p) => p.$w}px;
  height: ${(p) => p.$h}px;
  border-radius: 5px;
  background: #9c9c9c;
`;

const arrows = {
  up: "M0.500 7.500 4.500 1l4 6.500z",
  down: "M0.500 1.500h8L4.500 8z",
  left: "M7.500 0.500v8L1 4.500z",
  right: "M1.500 0.500v8L8 4.500z",
};

function Arrow({ dir }) {
  return (
    <svg width="9" height="9" viewBox="0 0 9 9">
      <path d={arrows[dir]} fill="#9c9c9c" />
    </svg>
  );
}

const Cursor = styled.div`
  position: absolute;
  left: 295px;
  top: 613px;
`;

function Sheet() {
  const cells = [];

  for (let row = 1; row <= 22; row++) {
    cells.push(
      <RowHead key={`r${row}`} $active={row === 3}>
        {row}
      </RowHead>
    );
    for (let col = 0; col < 18; col++) {
      const key = `${row}-${col}`;
      const covered = row >= 5 && row <= 9 && col >= 9 && col <= 14;
      if (covered) continue;
      if (row === 1 && col < 7) {
        const [text, w] = headers[col];
        cells.push(
          <HeadCell key={key}>
            <HeadText>
              <Fit w={w}>{text}</Fit>
            </HeadText>
            <FilterButton />
          </HeadCell>
        );
      } else if (row > 1 && row < 22 && col < 7) {
        const value = products[row - 2][col];
        const num = typeof value === "number";
        cells.push(
          <DataCell
            key={key}
            $num={num}
            $band={row % 2 === 0}
            $selected={row === 3 && col === 1}
            $last={row === 21 && col === 6}
          >
            <Fit w={num ? String(value).length * 6.7 : textWidths[value]}>{String(value)}</Fit>
          </DataCell>
        );
      } else {
        cells.push(<Cell key={key} />);
      }
    }
  }

  return (
    <SheetArea>
      <Grid>
        <Corner>
          <svg width="11" height="11" viewBox="0 0 11 11">
            <path d="M11 0v11H0z" fill="#8a8a8a" />
          </svg>
        </Corner>
        {letters.map((l) => (
          <ColHead key={l} $active={l === "B"}>
            {l}
          </ColHead>
        ))}
        <ColHead />
        <Merged>
          <Fit w={229}>BUSCARV</Fit>
        </Merged>
        {cells}
      </Grid>
      <ScrollColumn>
        <Arrow dir="up" />
        <Thumb $w={9} $h={391} />
        <Grow />
        <Arrow dir="down" />
      </ScrollColumn>
      <Cursor>
        <svg width="15" height="15" viewBox="0 0 15 15">
          <path d="M5 1h5v4h4v5h-4v4H5v-4H1V5h4z" fill="#fff" stroke="#000" strokeWidth="1.500" />
        </svg>
      </Cursor>
    </SheetArea>
  );
}

/* ---------- sheet tabs ---------- */

const SheetTabsBar = styled.div`
  flex: none;
  height: 30px;
  display: flex;
  align-items: flex-start;
  font-size: 12px;
`;

const ActiveSheet = styled.div`
  flex: none;
  width: 92px;
  height: 26px;
  padding-top: 7px;
  display: flex;
  flex-direction: column;
  align-items: center;
  border-radius: 0 0 4px 4px;
  background: #fff;
  color: #333;
  font-weight: 500;

  &::after {
    content: "";
    width: 76px;
    height: 2px;
    margin-top: 2px;
    background: #1e7145;
  }
`;

const SheetName = styled.div`
  font-weight: 600;
`;

function SheetTabs() {
  return (
    <SheetTabsBar>
      <Slot $w={109} $h={29}>
        <Slot $w={31}>
          <Svg width="5" height="9" viewBox="0 0 5 9" $color="#a0a0a0">
            <path d="M4.500 0.500l-4 4 4 4" />
          </Svg>
        </Slot>
        <Slot $w={31}>
          <Svg width="5" height="9" viewBox="0 0 5 9" $color="#a0a0a0">
            <path d="M0.500 0.500l4 4-4 4" />
          </Svg>
        </Slot>
        <Slot $w={17} />
      </Slot>
      <ActiveSheet>
        <Fit w={76}>ProductosAll</Fit>
      </ActiveSheet>
      <Slot $w={7} $h={30}>
        <Rule $h={16} />
      </Slot>
      <Slot $w={91} $h={31}>
        <SheetName>
          <Fit w={74}>BuscarMarca</Fit>
        </SheetName>
      </Slot>
      <Slot $w={9} $h={30}>
        <Rule $h={16} />
      </Slot>
      <Slot $w={80} $h={29}>
        <Svg width="11" height="11" viewBox="0 0 11 11" $stroke={1.100}>
          <path d="M5.500 0v11M0 5.500h11" />
        </Svg>
      </Slot>
      <Grow />
      <Slot $w={24} $h={31}>
        <Dots $w={12}>
          <i />
          <i />
          <i />
        </Dots>
      </Slot>
      <Slot $w={7} />
      <Slot $w={13} $h={29} $start>
        <Arrow dir="left" />
      </Slot>
      <Slot $w={429} $h={29}>
        <Thumb $w={429} $h={9} />
      </Slot>
      <Slot $w={46} $h={29}>
        <Arrow dir="right" />
      </Slot>
      <Slot $w={4} />
    </SheetTabsBar>
  );
}

/* ---------- status bar ---------- */

const StatusRow = styled.div`
  flex: none;
  height: 22px;
  display: flex;
  align-items: center;
  padding: 0 0 2px 12px;
  border-top: 1px solid #3a3a3a;
  background: #131313;
  font-size: 10.500px;
`;

const Strong = styled.span`
  font-weight: 700;
  color: #dedede;
`;

const ViewButton = styled.div`
  flex: none;
  width: 37.500px;
  height: 20px;
  display: flex;
  align-items: center;
  justify-content: center;
  background: ${(p) => (p.$active ? "#262626" : "transparent")};
`;

const Slider = styled.div`
  flex: none;
  width: 94px;
  height: 11px;
  display: flex;
  align-items: center;
  justify-content: center;
  background: linear-gradient(#9a9a9a, #9a9a9a) center / 100% 1px no-repeat;

  &::before {
    content: "";
    width: 5px;
    height: 11px;
    background: #bcbcbc;
  }
`;

function StatusBar() {
  return (
    <StatusRow>
      <Fit w={23}>Listo</Fit>
      <Slot $w={43} />
      <Svg width="14" height="12" viewBox="0 0 14 12">
        <path d="M5 11H0.500V0.500h12V4M0.500 3h12M3 5.500h3M3 8h2" />
        <circle cx="9.500" cy="8" r="3.500" />
        <circle cx="9.500" cy="8" r="1" />
      </Svg>
      <Slot $w={16} />
      <Svg width="13" height="13" viewBox="0 0 13 13">
        <circle cx="6" cy="1.800" r="1.300" />
        <path d="M0.500 3 4 4.500v3L2 12.500M11 3 8 4.500M5 8l1.500-1M8 4.500H4M7.500 7.500l5 5M12.500 7.500l-5 5" />
      </Svg>
      <Slot $w={3} />
      <Strong>
        <Fit w={179}>Accesibilidad: es necesario investigar</Fit>
      </Strong>
      <Grow />
      <ViewButton $active>
        <Svg width="13" height="12" viewBox="0 0 13 12" $color="#f0f0f0">
          <path d="M0.500 0.500h12v11H0.500zM4.500 0.500v11M8.500 0.500v11M0.500 4h12M0.500 8h12" />
        </Svg>
      </ViewButton>
      <ViewButton>
        <Svg width="13" height="12" viewBox="0 0 13 12">
          <path d="M0.500 0.500h12v11H0.500zM3.500 2.500h6v7.500h-6zM4 4.500h5M4 6.300h5M4 8.200h5" />
        </Svg>
      </ViewButton>
      <ViewButton>
        <Svg width="13" height="12" viewBox="0 0 13 12">
          <path d="M0.500 0.500h12v11H0.500zM4.500 0.500V6M8.500 0.500V7M4.500 6.500h4" />
        </Svg>
      </ViewButton>
      <Slot $w={18}>
        <Svg width="8" height="8" viewBox="0 0 8 8">
          <path d="M0 4h8" />
        </Svg>
      </Slot>
      <Slider />
      <Slot $w={15}>
        <Svg width="7" height="7" viewBox="0 0 7 7">
          <path d="M0 3.500h7M3.500 0v7" />
        </Svg>
      </Slot>
      <Slot $w={43}>
        <Fit w={25}>100%</Fit>
      </Slot>
    </StatusRow>
  );
}

/* ---------- windows taskbar ---------- */

const TaskbarRow = styled.footer`
  flex: 1;
  display: flex;
  background: #101010;
  font-size: 11px;
`;

const TaskButton = styled.div`
  flex: none;
  width: ${(p) => p.$w}px;
  margin-right: ${(p) => p.$mr || 0}px;
  display: flex;
  align-items: center;
  justify-content: center;
  border-bottom: 2px solid ${(p) => (p.$open ? "#e58a9c" : "transparent")};
  background: ${(p) => (p.$focused ? "#303030" : "transparent")};
`;

const Clock = styled.div`
  width: 61px;
  display: flex;
  flex-direction: column;
  align-items: center;
  justify-content: center;
  gap: 6px;
  padding-bottom: 4px;
`;

const ShowDesktop = styled.div`
  width: 5px;
  border-left: 1px solid #4a4a4a;
`;

function Taskbar() {
  return (
    <TaskbarRow>
      <TaskButton $w={47} $mr={5}>
        <svg width="16" height="16" viewBox="0 0 16 16">
          <path d="M0 2.300 6.700 1.300v6.300H0zM7.600 1.200 16 0v7.600H7.600zM0 8.500h6.700v6.300L0 13.800zM7.600 8.500H16V16l-8.400-1.200z" fill="#fff" />
        </svg>
      </TaskButton>
      <TaskButton $w={38} $mr={6} $open>
        <svg width="21" height="19" viewBox="0 0 21 19">
          <path d="M0.500 1h7l1.500 2h11v5H0.500z" fill="#d9932b" />
          <path d="M0.500 4.500h19.700V17H0.500z" fill="#ffd45e" />
          <path d="M4 18.500V12.500c0-1.500 1-2.500 2.500-2.500h7.700c1.500 0 2.500 1 2.500 2.500v6h-3.500v-4H7.500v4z" fill="#3c97c9" />
        </svg>
      </TaskButton>
      <TaskButton $w={42} $mr={6}>
        <svg width="23" height="23" viewBox="0 0 24 24">
          <defs>
            <linearGradient id="edgeTop" x1="0" y1="0" x2="1" y2="0.600">
              <stop offset="0" stopColor="#1fa3e6" />
              <stop offset="0.600" stopColor="#33c7c0" />
              <stop offset="1" stopColor="#6fdc5a" />
            </linearGradient>
          </defs>
          <path d="M0.600 11C0.500 18 5 23.500 12 23.500c4.500 0 8.500-2.500 10.500-6.500-2 1-4 1.500-6 1.300L14 15.500C12 13 13 11 14 10L9 5z" fill="#1178cc" />
          <path d="M9.500 10c-2.800 3.500-1.200 10 5 12.200 3-0.700 6-2.200 8-5.200-3.500 1.500-7.500 1.200-9.800-1.200-1.700-1.800-2-3.800-0.700-5.800z" fill="#0b4f9c" />
          <path d="M0.600 11C1.500 4.500 6.500 0.500 12 0.500c6.500 0 11.500 4.500 11.500 9.500 0 3.500-2.500 6-6 6-2.500 0-4-1-3.500-2 1-1.200 1.300-2 1-3.500C14.300 8 12 6.500 9 6.500c-4 0-7 2-8.400 4.500z" fill="url(#edgeTop)" />
        </svg>
      </TaskButton>
      <TaskButton $w={38} $mr={4} $open>
        <svg width="21" height="21" viewBox="0 0 21 21">
          <circle cx="11" cy="10.500" r="8.500" fill="#0c2230" stroke="#27637a" strokeWidth="1.500" />
          <path d="M4.500 0.500h7L10 3v13h6l2-3-1 7H4.500l2-3V3z" fill="#d79a48" stroke="#7c5426" strokeWidth="0.600" />
        </svg>
      </TaskButton>
      <TaskButton $w={45} $mr={5} $open $focused>
        <ExcelLogo size={22} />
      </TaskButton>
      <TaskButton $w={37} $open>
        <svg width="22" height="22" viewBox="0 0 22 22" fill="none" stroke="#b8b8b8">
          <circle cx="11" cy="11" r="10" fill="#1f1f1f" strokeWidth="1.300" />
          <path d="M11 11C7.500 10.500 6.500 7.500 8 4.500M11 11c2-3 5.500-2.500 7 0.500M11 11c1.500 3.500-0.500 6.500-4 6.500" strokeWidth="2" />
        </svg>
      </TaskButton>
      <Grow />
      <Slot $w={22}>
        <Svg width="11" height="6" viewBox="0 0 11 6">
          <path d="M0.500 5.500l5-5 5 5" />
        </Svg>
      </Slot>
      <Slot $w={24}>
        <Svg width="16" height="13" viewBox="0 0 16 13">
          <path d="M5 2h10.500v7.500h-10M10.500 9.500v3M6 12.500h8M0.500 0.500h4v3.500h-4zM2.500 4v8.500h3" />
        </Svg>
      </Slot>
      <Slot $w={21}>
        <Svg width="16" height="13" viewBox="0 0 16 13" $stroke={1.100}>
          <path d="M0.500 4.500h2.500L6.500 1v11L3 8.500H0.500zM8.500 4.500c1 1 1 3 0 4M10.500 2.700c2 2 2 5.500 0 7.600M12.500 1c3 3 3 8 0 11" />
        </Svg>
      </Slot>
      <Slot $w={34} $h={35}>
        <Fit w={18}>ESP</Fit>
      </Slot>
      <Clock>
        <Fit w={26}>23:36</Fit>
        <Fit w={48}>13/1/2026</Fit>
      </Clock>
      <ShowDesktop />
    </TaskbarRow>
  );
}

export default function App() {
  return (
    <>
      <GlobalStyle />
      <Window>
        <TopBar />
        <RibbonTabs />
        <Ribbon />
        <FormulaBar />
        <Sheet />
        <SheetTabs />
        <StatusBar />
        <Taskbar />
      </Window>
    </>
  );
}
